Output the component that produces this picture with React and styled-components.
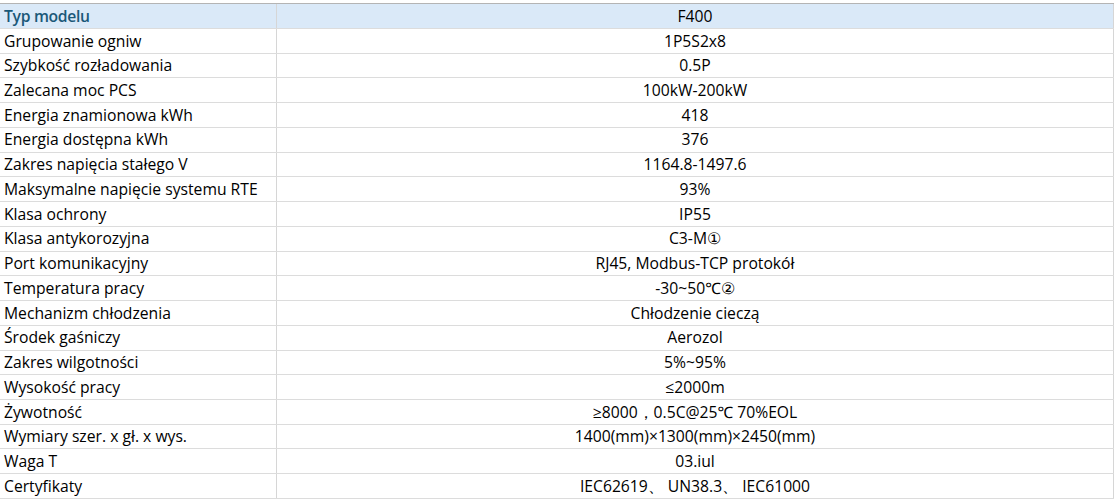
import React from 'react';
import styled, { createGlobalStyle } from 'styled-components';

const GlobalStyle = createGlobalStyle`
  html, body {
    margin: 0;
    padding: 0;
    background: #ffffff;
  }
  body {
    font-family: "Open Sans", "Noto Sans", "Liberation Sans", sans-serif;
    color: #000;
  }
`;

const Sheet = styled.div`
  width: 1116px;
  padding-top: 3px;
`;

const Table = styled.div`
  width: 1114px;
  border-top: 1px solid #b4b4b4;
`;

const Row = styled.div`
  display: grid;
  grid-template-columns: 277px 837px;
  height: 24.74px;
  box-sizing: border-box;
  border-bottom: 1px solid #dcdcdc;
  background: ${p => (p.$head ? '#dae9f8' : '#ffffff')};
  &:first-child {
    height: 25px;
  }
`;

const Cell = styled.div`
  display: flex;
  align-items: center;
  justify-content: ${p => (p.$center ? 'center' : 'flex-start')};
  padding-left: ${p => (p.$center ? '0' : '4px')};
  padding-top: 1px;
  border-right: 1px solid #d6d6d6;
  font-size: 15.7px;
  line-height: 1;
  white-space: nowrap;
  overflow: hidden;
  font-weight: ${p => (p.$head ? 600 : 400)};
  color: ${p => (p.$head ? '#1b5878' : '#000')};
  letter-spacing: ${p => (p.$head ? '-0.3px' : '0')};
`;

const rows = [
  ['Grupowanie ogniw', '1P5S2x8'],
  ['Szybkość rozładowania', '0.5P'],
  ['Zalecana moc PCS', '100kW-200kW'],
  ['Energia znamionowa kWh', '418'],
  ['Energia dostępna kWh', '376'],
  ['Zakres napięcia stałego V', '1164.8-1497.6'],
  ['Maksymalne napięcie systemu RTE', '93%'],
  ['Klasa ochrony', 'IP55'],
  ['Klasa antykorozyjna', 'C3-M①'],
  ['Port komunikacyjny', 'RJ45, Modbus-TCP protokół'],
  ['Temperatura pracy', '-30~50℃②'],
  ['Mechanizm chłodzenia', 'Chłodzenie cieczą'],
  ['Środek gaśniczy', 'Aerozol'],
  ['Zakres wilgotności', '5%~95%'],
  ['Wysokość pracy', '≤2000m'],
  ['Żywotność', '≥8000，0.5C@25℃ 70%EOL'],
  ['Wymiary szer. x gł. x wys.', '1400(mm)×1300(mm)×2450(mm)'],
  ['Waga T', '03.iul'],
  ['Certyfikaty', 'IEC62619、 UN38.3、 IEC61000'],
];

export default function App() {
  return (
    <Sheet>
      <GlobalStyle />
      <Table>
        <Row $head>
          <Cell $head>Typ modelu</Cell>
          <Cell $center>F400</Cell>
        </Row>
        {rows.map(([label, value]) => (
          <Row key={label}>
            <Cell>{label}</Cell>
            <Cell $center>{value}</Cell>
          </Row>
        ))}
      </Table>
    </Sheet>
  );
}
